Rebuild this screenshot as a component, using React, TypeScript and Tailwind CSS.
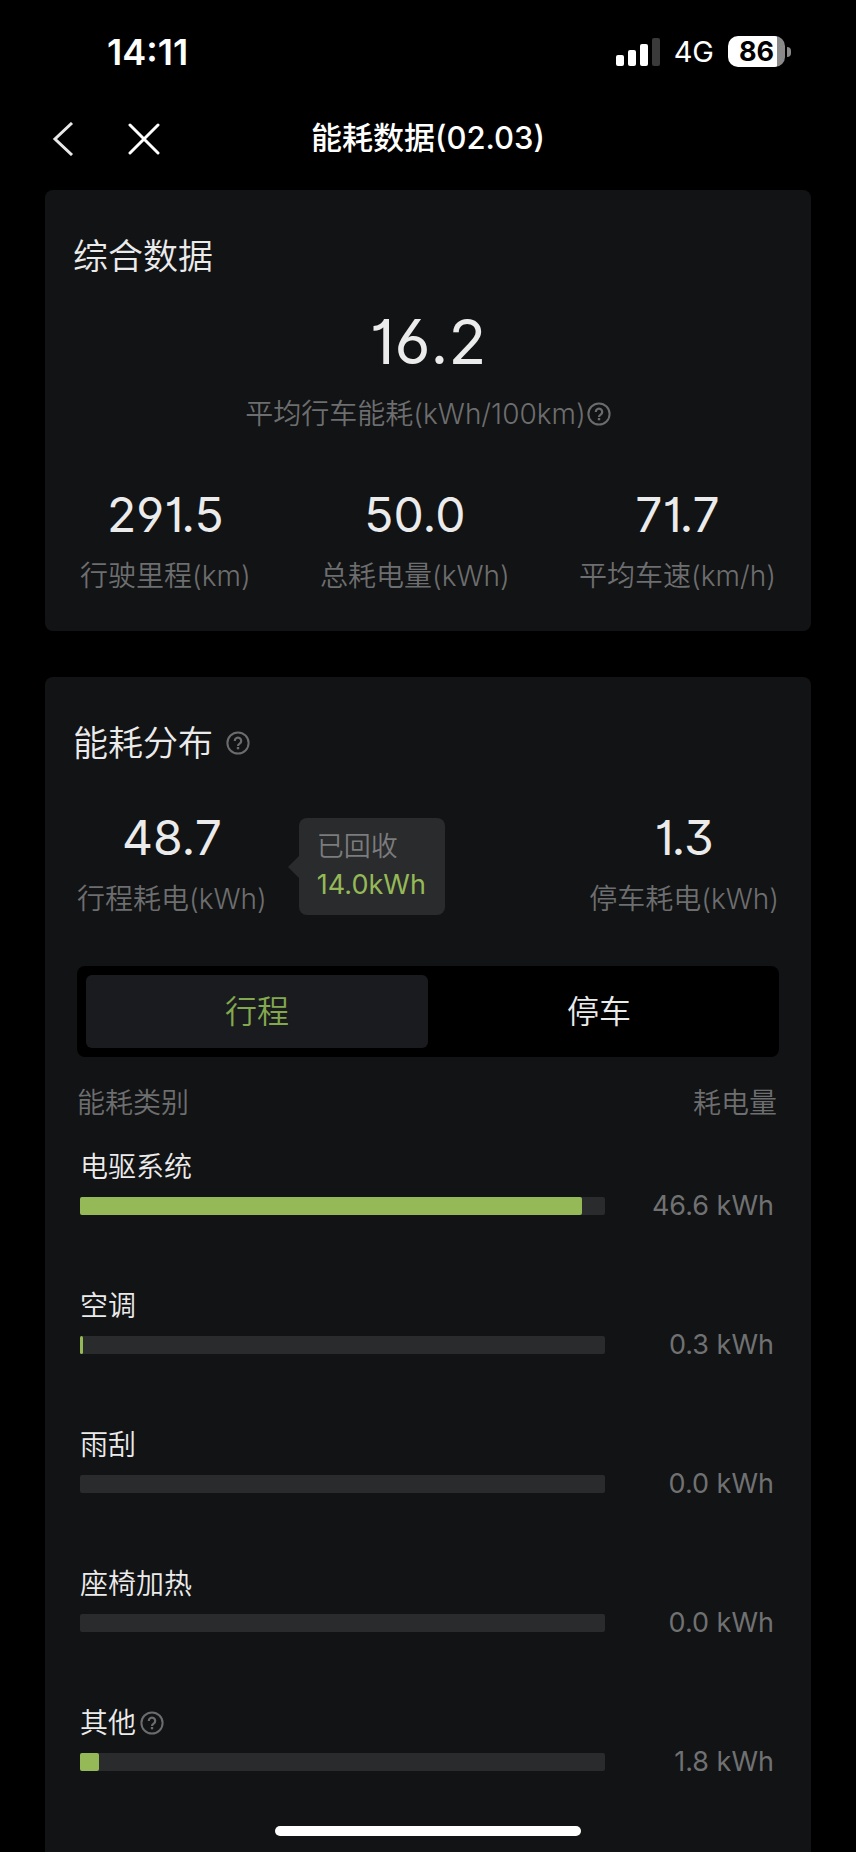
import { useState } from "react";

const usage = [
  { name: "电驱系统", value: "46.6", percent: 95.6 },
  { name: "空调", value: "0.3", percent: 0.6 },
  { name: "雨刮", value: "0.0", percent: 0 },
  { name: "座椅加热", value: "0.0", percent: 0 },
  { name: "其他", value: "1.8", percent: 3.7, help: true },
];

const tabs = ["行程", "停车"];

function HelpButton() {
  return (
    <button aria-label="说明" className="shrink-0">
      <svg className="w-6 h-6" viewBox="0 0 24 24" fill="none" stroke="#6b6c6d" strokeWidth="2">
        <circle cx="12" cy="12" r="10.6" />
        <path d="M8.8 10a3.2 3.2 0 1 1 4.9 2.6c-1.2.8-1.7 1.2-1.7 2.4" strokeWidth="2.2" />
        <path d="M12 16v2.3" strokeWidth="2.4" />
      </svg>
    </button>
  );
}

function Stat({ value, label }: { value: string; label: string }) {
  return (
    <div className="flex flex-col items-center">
      <span className="text-[48px] leading-[60px] text-[#ebebec] [font-feature-settings:'cv01','cv03','cv04','cv09']">{value}</span>
      <span className="mt-[13px] text-[28px] leading-9 font-[350] text-[#6d6e6f]">{label}</span>
    </div>
  );
}

function StatusBar() {
  return (
    <div className="flex items-center justify-between h-[103px] pl-[107px] pr-[65px]">
      <span className="text-[36px] font-semibold">14:11</span>
      <div className="flex items-center gap-[14px]">
        <svg className="w-11 h-7" viewBox="0 0 44 28" fill="#fff">
          <rect x="0" y="17" width="8" height="11" rx="2" />
          <rect x="12" y="12" width="8" height="16" rx="2" />
          <rect x="24" y="6" width="8" height="22" rx="2" />
          <rect x="36" y="0" width="8" height="28" rx="2" fill="#3a3a3a" />
        </svg>
        <span className="text-[29px]">4G</span>
        <div className="flex items-center gap-[2px]">
          <div className="flex items-center justify-center w-[57px] h-[31px] rounded-[10px] bg-linear-to-r from-white from-86% to-[#8a8a8a] to-86%">
            <span className="text-[27px] leading-[31px] font-bold text-black">86</span>
          </div>
          <div className="w-1 h-[10px] rounded-r-full bg-[#8a8a8a]"></div>
        </div>
      </div>
    </div>
  );
}

export default function App() {
  const [tab, setTab] = useState(tabs[0]);

  return (
    <div className="relative flex flex-col min-h-screen bg-black text-white font-['Inter','Noto_Sans_CJK_SC',sans-serif]">
      <StatusBar />
      <header className="grid grid-cols-3 items-center h-[71px] mb-4 px-[52px]">
        <div className="flex items-center gap-[54px]">
          <button aria-label="返回">
            <svg className="w-[22px] h-[34px]" viewBox="0 0 22 34" fill="none" stroke="#e8e8e8" strokeWidth="3">
              <path d="M20 1 3 17l17 16" />
            </svg>
          </button>
          <button aria-label="关闭">
            <svg className="w-8 h-8" viewBox="0 0 32 32" fill="none" stroke="#fff" strokeWidth="3" strokeLinecap="round">
              <path d="M2 2l28 28M30 2 2 30" />
            </svg>
          </button>
        </div>
        <h1 className="text-center text-[31px] font-medium whitespace-nowrap">能耗数据(02.03)</h1>
      </header>
      <main className="flex flex-col flex-1 gap-[46px] px-[45px]">
        <section className="h-fit rounded-lg bg-[#121314] pt-[41px] pb-[37px]">
          <h2 className="px-7 text-[35px] leading-[50px] font-[350] text-[#ebebec]">综合数据</h2>
          <div className="flex flex-col items-center pt-[23px]">
            <span className="text-[62px] leading-[76px] text-[#ebebec] [font-feature-settings:'cv01','cv03','cv04','cv09']">16.2</span>
            <div className="flex items-center gap-px mt-4">
              <span className="text-[28px] leading-9 font-[350] text-[#6d6e6f]">平均行车能耗(kWh/100km)</span>
              <HelpButton />
            </div>
          </div>
          <div className="flex justify-between mt-[53px] px-[35px]">
            <Stat value="291.5" label="行驶里程(km)" />
            <Stat value="50.0" label="总耗电量(kWh)" />
            <Stat value="71.7" label="平均车速(km/h)" />
          </div>
        </section>
        <section className="flex-1 rounded-t-lg bg-[#121314] pt-[41px]">
          <div className="flex items-center gap-[13px] px-7">
            <h2 className="text-[35px] leading-[50px] font-[350] text-[#ebebec]">能耗分布</h2>
            <HelpButton />
          </div>
          <div className="flex items-start mt-10 px-8">
            <Stat value="48.7" label="行程耗电(kWh)" />
            <div className="flex items-center mt-[10px] ml-[21px]">
              <svg className="w-[11px] h-[22px]" viewBox="0 0 11 22" fill="#292b2c">
                <path d="M11 0v22L0 11z" />
              </svg>
              <div className="flex flex-col rounded-lg bg-[#292b2c] w-[146px] h-[97px] pt-[10px] pl-[18px] text-[27px] leading-[38px]">
                <span className="font-[350] text-[#7b7c7d]">已回收</span>
                <span className="text-[#95b957]">14.0kWh</span>
              </div>
            </div>
            <div className="ml-auto">
              <Stat value="1.3" label="停车耗电(kWh)" />
            </div>
          </div>
          <div role="tablist" className="flex mx-8 mt-[49px] p-[9px] rounded-lg bg-black">
            {tabs.map((name) => (
              <button
                key={name}
                role="tab"
                aria-selected={tab === name}
                onClick={() => setTab(name)}
                className={`flex-1 h-[73px] rounded-md text-[32px] font-[350] ${tab === name ? "bg-[#1a1b1e] text-[#83a94f]" : "text-[#ebebec]"}`}
              >
                {name}
              </button>
            ))}
          </div>
          <table className="w-full mt-[26px] text-[28px] leading-10 font-[350]">
            <thead className="text-[#6d6e6f]">
              <tr>
                <th className="pl-8 text-left font-[350]">能耗类别</th>
                <th className="pr-[34px] text-right font-[350]">耗电量</th>
              </tr>
            </thead>
            <tbody>
              {usage.map((item) => (
                <tr key={item.name} className="h-[139px] align-top">
                  <td className="pt-6 pl-[35px]">
                    <div className="flex items-center gap-1 text-[#ebebec]">
                      {item.name}
                      {item.help && <HelpButton />}
                    </div>
                    <div className="h-[18px] mt-[10px] rounded-xs bg-[#292b2c]">
                      <div className="h-full rounded-xs bg-[#95b957]" style={{ width: `${item.percent}%` }}></div>
                    </div>
                  </td>
                  <td className="w-[206px] pt-[63px] pr-[37px] text-right text-[27px] font-normal text-[#707172]">{item.value} kWh</td>
                </tr>
              ))}
            </tbody>
          </table>
        </section>
      </main>
      <div className="absolute bottom-4 left-1/2 -translate-x-1/2 w-[306px] h-[10px] rounded-full bg-white"></div>
    </div>
  );
}
